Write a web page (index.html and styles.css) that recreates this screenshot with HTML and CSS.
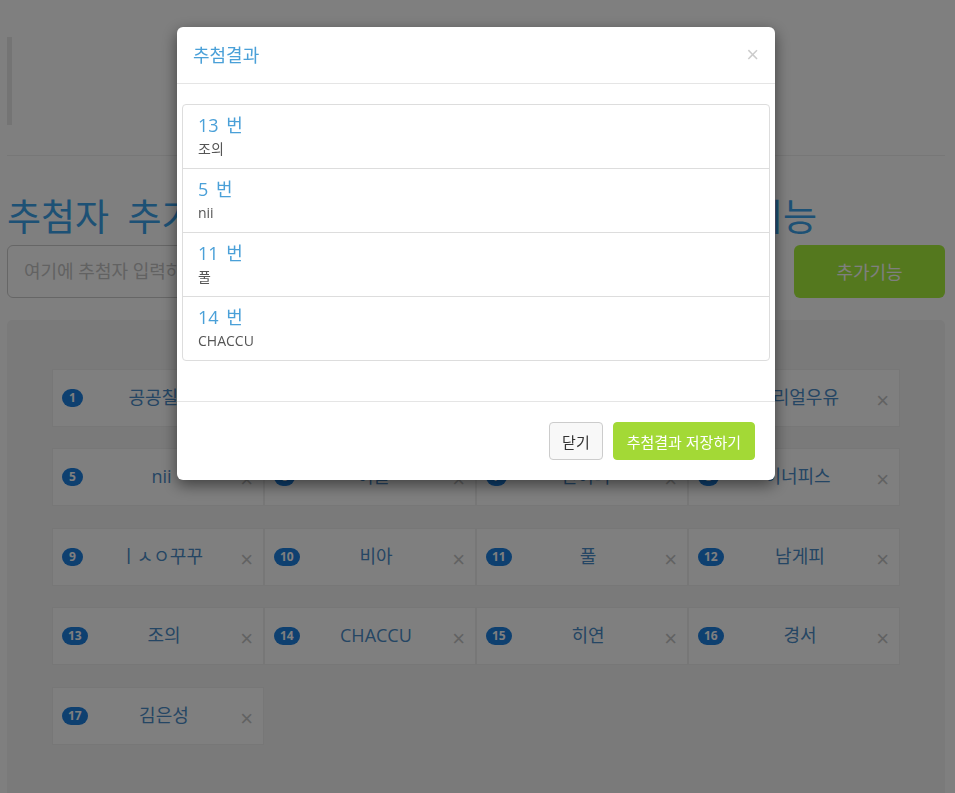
FILE: index.html
```html
<!DOCTYPE html>
<html lang="ko">
<head>
<meta charset="utf-8">
<title>추첨</title>
<link rel="stylesheet" href="styles.css">
</head>
<body>
<div class="page">
  <div class="quote"></div>
  <hr class="rule">
  <h1 class="title">추첨자 추가 후 랜덤으로 당첨자를 뽑는 추첨 기능</h1>
  <div class="input-row">
    <input class="name-input" type="text" placeholder="여기에 추첨자 입력하고 엔터를 누르세요">
    <button class="add-btn">추가기능</button>
  </div>
  <div class="panel">
    <div class="grid">
      <div class="card"><span class="badge">1</span><span class="name">공공칠빵</span><span class="x">×</span></div>
      <div class="card"><span class="badge">2</span><span class="name">하늘</span><span class="x">×</span></div>
      <div class="card"><span class="badge">3</span><span class="name">민트</span><span class="x">×</span></div>
      <div class="card"><span class="badge">4</span><span class="name">더리얼우유</span><span class="x">×</span></div>
      <div class="card"><span class="badge">5</span><span class="name">nii</span><span class="x">×</span></div>
      <div class="card"><span class="badge">6</span><span class="name">이슬</span><span class="x">×</span></div>
      <div class="card"><span class="badge">7</span><span class="name">빈이니</span><span class="x">×</span></div>
      <div class="card"><span class="badge">8</span><span class="name">이너피스</span><span class="x">×</span></div>
      <div class="card"><span class="badge">9</span><span class="name">ㅣㅅㅇ꾸꾸</span><span class="x">×</span></div>
      <div class="card"><span class="badge">10</span><span class="name">비아</span><span class="x">×</span></div>
      <div class="card"><span class="badge">11</span><span class="name">풀</span><span class="x">×</span></div>
      <div class="card"><span class="badge">12</span><span class="name">남게피</span><span class="x">×</span></div>
      <div class="card"><span class="badge">13</span><span class="name">조의</span><span class="x">×</span></div>
      <div class="card"><span class="badge">14</span><span class="name">CHACCU</span><span class="x">×</span></div>
      <div class="card"><span class="badge">15</span><span class="name">히연</span><span class="x">×</span></div>
      <div class="card"><span class="badge">16</span><span class="name">경서</span><span class="x">×</span></div>
      <div class="card"><span class="badge">17</span><span class="name">김은성</span><span class="x">×</span></div>
    </div>
  </div>
</div>

<div class="backdrop"></div>
<div class="modal">
  <div class="dialog">
    <div class="m-header">
      <span class="m-title">추첨결과</span>
      <span class="m-close">×</span>
    </div>
    <div class="m-body">
      <div class="list">
        <div class="item"><h4 class="item-head">13 번</h4><p class="item-text">조의</p></div>
        <div class="item"><h4 class="item-head">5 번</h4><p class="item-text">nii</p></div>
        <div class="item"><h4 class="item-head">11 번</h4><p class="item-text">풀</p></div>
        <div class="item"><h4 class="item-head">14 번</h4><p class="item-text">CHACCU</p></div>
      </div>
    </div>
    <div class="m-footer">
      <button class="btn btn-default">닫기</button>
      <button class="btn btn-save">추첨결과 저장하기</button>
    </div>
  </div>
</div>
</body>
</html>
```

FILE: styles.css
```css
* { box-sizing: border-box; }
html, body { margin: 0; padding: 0; height: 100%; overflow: hidden; }
body {
  background: #fff;
  font-family: "Open Sans", "Noto Sans CJK KR", sans-serif;
  font-size: 14px;
  line-height: 1.42857;
  color: #333;
}
.page { padding: 37px 10px 0 7px; }
.quote {
  height: 88px;
  border-left: 5px solid #e8e8e8;
  margin-bottom: 30px;
}
.rule {
  margin: 0;
  border: 0;
  border-top: 1px solid #eee;
}
.title {
  width: 810px;
  margin: 41px 0 7px;
  font-size: 37px;
  font-weight: 400;
  line-height: 1.1;
  text-align: justify;
  text-align-last: justify;
  color: #3aa2ea;
}
.input-row {
  display: flex;
  gap: 19px;
  height: 53px;
}
.name-input {
  flex: 1;
  height: 53px;
  border: 1px solid #ccc;
  border-radius: 6px;
  padding: 0 16px;
  font-family: "Open Sans", "Noto Sans CJK KR", sans-serif;
  font-size: 18px;
  color: #555;
  background: #fff;
}
.name-input::placeholder { color: #c4c4c4; }
.add-btn {
  width: 151px;
  height: 53px;
  border: 0;
  border-radius: 6px;
  background: #a8f03c;
  color: #fff;
  font-family: "Open Sans", "Noto Sans CJK KR", sans-serif;
  font-size: 18px;
}
.panel {
  margin-top: 22px;
  background: #f5f5f5;
  border-radius: 5px;
  padding: 49px 45px 60px;
  min-height: 500px;
}
.grid {
  display: grid;
  grid-template-columns: repeat(4, 212px);
  row-gap: 21.5px;
}
.card {
  height: 58px;
  background: #fff;
  border: 1px solid #eee;
  display: flex;
  align-items: center;
  padding: 0 10px 0 9px;
}
.badge {
  min-width: 21px;
  height: 18px;
  padding: 0 6px;
  border-radius: 10px;
  background: #1d80e0;
  color: #fff;
  font-family: "Open Sans", sans-serif;
  font-size: 12px;
  font-weight: 700;
  line-height: 18px;
  text-align: center;
}
.name {
  flex: 1;
  text-align: center;
  font-size: 18px;
  color: #4a8cc8;
}
.x {
  font-family: "Liberation Sans", sans-serif;
  font-size: 22px;
  font-weight: 400;
  line-height: 1;
  color: #c4c4c4;
  margin-top: 6px;
}
.backdrop {
  position: fixed;
  inset: 0;
  background: rgba(0, 0, 0, 0.5);
}
.modal {
  position: fixed;
  inset: 0;
}
.dialog {
  width: 598px;
  margin: 27px 0 0 177px;
  background: #fff;
  border-radius: 6px;
  box-shadow: 0 5px 15px rgba(0, 0, 0, 0.5);
}
.m-header {
  padding: 15px 16px 15px 16px;
  border-bottom: 1px solid #e5e5e5;
  display: flex;
  justify-content: space-between;
  align-items: center;
}
.m-title {
  font-size: 18px;
  line-height: 26px;
  color: #4aa0d8;
}
.m-close {
  font-family: "Liberation Sans", sans-serif;
  font-size: 22px;
  font-weight: 400;
  line-height: 1;
  color: #000;
  opacity: 0.2;
}
.m-body { padding: 20px 5px 20px; }
.list {
  border: 1px solid #ddd;
  border-radius: 4px;
  margin-bottom: 20px;
}
.item {
  padding: 10px 15px;
  border-bottom: 1px solid #ddd;
}
.item:last-child { border-bottom: 0; }
.item-head {
  margin: 0 0 5px;
  font-size: 18px;
  font-weight: 400;
  line-height: 20px;
  word-spacing: 3px;
  color: #4aa0d8;
}
.item-text {
  margin: 0;
  font-size: 14px;
  line-height: 18px;
  color: #555;
}
.m-footer {
  padding: 20px;
  border-top: 1px solid #e5e5e5;
  display: flex;
  justify-content: flex-end;
  gap: 10px;
}
.btn {
  height: 38px;
  padding: 0 12px;
  border-radius: 4px;
  font-family: "Open Sans", "Noto Sans CJK KR", sans-serif;
  font-size: 15px;
}
.btn-default {
  background: #f8f8f8;
  border: 1px solid #ccc;
  color: #333;
}
.btn-save {
  padding: 0 13px;
  background: #a3d936;
  border: 1px solid #a3d936;
  color: #fff;
}
```
